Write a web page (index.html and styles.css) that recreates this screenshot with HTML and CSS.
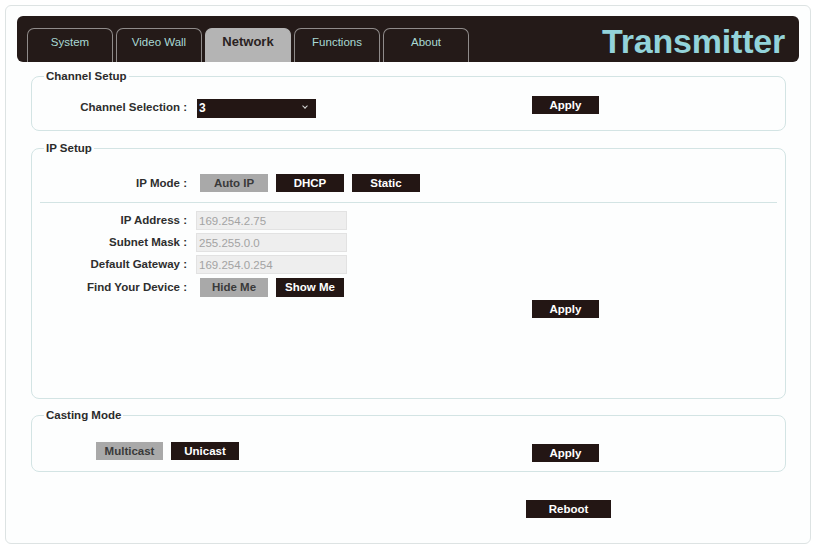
FILE: index.html
```html
<!DOCTYPE html>
<html lang="en">
<head>
<meta charset="utf-8">
<title>Transmitter - Network</title>
<link rel="stylesheet" href="styles.css">
</head>
<body>
<div class="card">
  <header class="topbar">
    <nav class="tabs">
      <div class="tab">System</div>
      <div class="tab">Video Wall</div>
      <div class="tab active">Network</div>
      <div class="tab">Functions</div>
      <div class="tab">About</div>
    </nav>
    <div class="brand">Transmitter</div>
  </header>

  <main class="content">
    <fieldset class="group group-channel">
      <legend>Channel Setup</legend>
      <div class="row">
        <label class="lbl">Channel Selection :</label>
        <div class="select-wrap">
          <select class="select"><option>3</option></select>
        </div>
        <button class="btn dark apply">Apply</button>
      </div>
    </fieldset>

    <fieldset class="group group-ip">
      <legend>IP Setup</legend>
      <div class="row">
        <label class="lbl">IP Mode :</label>
        <div class="btns">
          <button class="btn gray">Auto IP</button>
          <button class="btn dark">DHCP</button>
          <button class="btn dark">Static</button>
        </div>
      </div>
      <div class="sep"></div>
      <div class="fields">
        <div class="row field">
          <label class="lbl">IP Address :</label>
          <input class="inp" value="169.254.2.75" disabled>
        </div>
        <div class="row field">
          <label class="lbl">Subnet Mask :</label>
          <input class="inp" value="255.255.0.0" disabled>
        </div>
        <div class="row field">
          <label class="lbl">Default Gateway :</label>
          <input class="inp" value="169.254.0.254" disabled>
        </div>
        <div class="row field find-row">
          <label class="lbl">Find Your Device :</label>
          <div class="btns find">
            <button class="btn gray">Hide Me</button>
            <button class="btn dark">Show Me</button>
          </div>
        </div>
      </div>
      <div class="row apply-row">
        <button class="btn dark apply">Apply</button>
      </div>
    </fieldset>

    <fieldset class="group group-cast">
      <legend>Casting Mode</legend>
      <div class="row">
        <div class="btns cast">
          <button class="btn gray">Multicast</button>
          <button class="btn dark">Unicast</button>
        </div>
        <button class="btn dark apply">Apply</button>
      </div>
    </fieldset>

    <div class="reboot-row">
      <button class="btn dark reboot">Reboot</button>
    </div>
  </main>
</div>
</body>
</html>
```

FILE: styles.css
```css
* { box-sizing: border-box; }

html, body {
  margin: 0;
  padding: 0;
  background: #ffffff;
  font-family: "Liberation Sans", Arial, sans-serif;
  color: #2e2e2e;
}

.card {
  margin: 5px;
  width: 806px;
  height: 539px;
  border: 1px solid #dde3e3;
  border-radius: 6px;
  background: #fdfefe;
  padding: 10px 11px 0 11px;
}

/* header */
.topbar {
  height: 46px;
  background: #241a18;
  border-radius: 6px;
  padding: 12px 14px 0 10px;
  display: flex;
}

.tabs {
  display: flex;
  gap: 3px;
}

.tab {
  width: 86px;
  height: 34px;
  border: 1px solid #8f8b8a;
  border-bottom: 0;
  border-radius: 7px 7px 0 0;
  text-align: center;
  padding-top: 6px;
  font-size: 11.5px;
  line-height: 14px;
  color: #a9d9d4;
}

.tab.active {
  background: #b4b4b4;
  border-color: #b4b4b4;
  color: #2a2222;
  font-weight: bold;
  font-size: 13px;
}

.brand {
  margin-left: auto;
  margin-top: -4px;
  font-size: 34px;
  line-height: 34px;
  font-weight: bold;
  color: #93d3da;
  letter-spacing: -0.2px;
}

/* content */
.content {
  margin: 0 13px 0 14px;
}

.group {
  margin: 0;
  padding: 0;
  min-width: 0;
  border: 1px solid #d3e4e4;
  border-radius: 8px;
}

.group legend {
  margin-left: 12px;
  padding: 0 2px;
  font-size: 11.5px;
  line-height: 13px;
  font-weight: bold;
  color: #2b2b2b;
}

.group-channel { margin-top: 8px; padding: 13px 0 13px; }
.group-ip { margin-top: 11px; padding: 19px 0 80px; }
.group-cast { margin-top: 10px; padding: 20px 0 9px; }

.row {
  display: grid;
  grid-template-columns: 155px 327px 67px;
  column-gap: 9px;
  align-items: start;
}

.lbl {
  text-align: right;
  font-size: 11.5px;
  font-weight: bold;
  line-height: 18px;
  color: #2e2e2e;
  white-space: nowrap;
}

.group-channel .lbl { margin-top: 2px; line-height: 19px; }

.select-wrap {
  position: relative;
  width: 119px;
  height: 19px;
  margin-top: 2px;
  margin-left: 1px;
}

.select {
  appearance: none;
  -webkit-appearance: none;
  width: 100%;
  height: 19px;
  border: 0;
  border-radius: 0;
  background: #231614;
  color: #ffffff;
  font-family: "Liberation Sans", Arial, sans-serif;
  font-size: 12px;
  font-weight: bold;
  padding: 0 0 0 2px;
  margin: 0;
}

.select-wrap::after {
  content: "";
  position: absolute;
  right: 9px;
  top: 6px;
  width: 3px;
  height: 3px;
  border-right: 1.5px solid #d9d9d9;
  border-bottom: 1.5px solid #d9d9d9;
  transform: rotate(45deg);
}

.btn {
  height: 18px;
  border: 0;
  border-radius: 0;
  margin: 0;
  padding: 0;
  font-family: "Liberation Sans", Arial, sans-serif;
  font-size: 11.5px;
  font-weight: bold;
  line-height: 18px;
  text-align: center;
  cursor: pointer;
}

.btn.dark {
  background: #231614;
  color: #ffffff;
}

.btn.gray {
  background: #a9a9a9;
  color: #3a3a3a;
}

.apply { width: 67px; }

.group-cast .apply { margin-top: 2px; }

.btns {
  display: flex;
  gap: 8px;
  margin-left: 4px;
}

.btns .btn { width: 68px; }

.sep {
  height: 1px;
  background: #d3e4e4;
  margin: 10px 8px 0;
}

.fields {
  display: flex;
  flex-direction: column;
  gap: 3px;
  margin-top: 8px;
}

.field .lbl { line-height: 19px; }

.inp {
  width: 151px;
  height: 19px;
  margin: 0;
  border: 1px solid #e2e2e2;
  background: #eeeeee;
  color: #a3a3a3;
  font-family: "Liberation Sans", Arial, sans-serif;
  font-size: 11.5px;
  padding: 0 2px;
  border-radius: 0;
}

.find { margin-top: 1px; }
.find .btn { height: 19px; line-height: 19px; }
.find-row .lbl { margin-top: 1px; }

.apply-row { margin-top: 3px; }
.apply-row .apply { grid-column: 3; }

.cast {
  grid-column: 1 / 3;
  margin-left: 64px;
  gap: 8px;
}

.cast .btn { width: 67px; }
.cast .btn + .btn { width: 68px; }

.reboot-row {
  margin-top: 27px;
  padding-left: 495px;
}

.reboot { width: 85px; }
```
